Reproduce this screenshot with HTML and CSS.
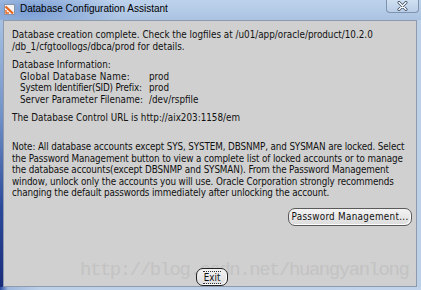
FILE: index.html
```html
<!DOCTYPE html>
<html>
<head>
<meta charset="utf-8">
<link rel="stylesheet" href="styles.css">
</head>
<body>
<div class="window">
  <div class="titlebar">
    <svg class="app-icon" width="11" height="11" viewBox="0 0 11 11">
      <rect x="0.5" y="0.5" width="10" height="10" fill="#f4f4f4" stroke="#8a94a8"/>
      <path d="M1.5 2.5 L9 9.5" stroke="#e8641c" stroke-width="2.2"/>
      <path d="M2 6 L2 9 L5 9" stroke="#e8641c" stroke-width="1.4" fill="none"/>
    </svg>
    <span class="title">Database Configuration Assistant</span>
    <div class="close-btn">
      <svg width="11" height="10" viewBox="0 0 11 10">
        <path d="M2 1.5 L9 8.5 M9 1.5 L2 8.5" stroke="#3a4a60" stroke-width="3" stroke-linecap="round"/>
        <path d="M2 1.5 L9 8.5 M9 1.5 L2 8.5" stroke="#ffffff" stroke-width="1.5" stroke-linecap="round"/>
      </svg>
    </div>
  </div>
  <div class="frame-row">
    <div class="frame-left"></div>
    <div class="content">
      <p class="para">Database creation complete. Check the logfiles at /u01/app/oracle/product/10.2.0<br>/db_1/cfgtoollogs/dbca/prod for details.</p>
      <div class="info">
        <div>Database Information:</div>
        <div class="kv"><span class="k k-wide">Global Database Name:</span><span>prod</span></div>
        <div class="kv"><span class="k k-tight">System Identifier(SID) Prefix:</span><span>prod</span></div>
        <div class="kv"><span class="k">Server Parameter Filename:</span><span>/dev/rspfile</span></div>
      </div>
      <p class="url">The Database Control URL is http://aix203:1158/em</p>
      <p class="note">Note: All database accounts except SYS, SYSTEM, DBSNMP, and SYSMAN are locked. Select<br>the Password Management button to view a complete list of locked accounts or to manage<br>the database accounts(except DBSNMP and SYSMAN). From the Password Management<br>window, unlock only the accounts you will use. Oracle Corporation strongly recommends<br>changing the default passwords immediately after unlocking the account.</p>
      <div class="pw-row"><button class="btn pw-btn">Password Management...</button></div>
      <div class="spacer"></div>
      <div class="watermark">http://blog.csdn.net/huangyanlong</div>
      <div class="exit-row"><button class="btn exit-btn"><span class="focus">Exit</span></button></div>
    </div>
    <div class="frame-right"></div>
  </div>
  <div class="frame-bottom"></div>
</div>
</body>
</html>
```

FILE: styles.css
```css
html, body {
  margin: 0;
  padding: 0;
  width: 421px;
  height: 290px;
  overflow: hidden;
  background: #b9cde6;
}
.window {
  width: 421px;
  height: 290px;
  display: flex;
  flex-direction: column;
}
.titlebar {
  height: 20px;
  flex: none;
  display: flex;
  align-items: flex-start;
  position: relative;
  background:
    radial-gradient(ellipse 90px 26px at 30px 10px, rgba(100,140,205,0.75), rgba(100,140,205,0) 100%),
    linear-gradient(to bottom, #bdd2ec 0%, #b3cae6 60%, #aac3e2 100%);
}
.app-icon {
  margin: 4px 0 0 4px;
  flex: none;
}
.title {
  margin: 3px 0 0 5px;
  font-family: "Liberation Sans", Arial, sans-serif;
  font-size: 10px;
  line-height: 12px;
  color: #000;
}
.close-btn {
  position: absolute;
  left: 386px;
  top: 0;
  width: 33px;
  height: 13px;
  box-sizing: border-box;
  border: 1px solid #7e93b0;
  border-top: none;
  border-radius: 0 0 4px 4px;
  background: linear-gradient(to bottom, #d0e0f2, #b9cde6);
  display: flex;
  align-items: center;
  justify-content: center;
}
.frame-row {
  flex: 1;
  display: flex;
  min-height: 0;
}
.frame-left {
  width: 3px;
  flex: none;
  background: linear-gradient(to bottom, #a7c1e3 0%, #7393c8 35%, #2c4a9a 70%, #1a2c7c 100%);
}
.frame-right {
  width: 4px;
  flex: none;
  background: #bcd0e8;
}
.frame-bottom {
  height: 3px;
  flex: none;
  background: linear-gradient(to right, #2a4aa0 0px, #9fb8dc 8px, #bcd0e8 40px, #c0d3ea 100%);
}
.content {
  flex: 1;
  position: relative;
  display: flex;
  flex-direction: column;
  background: #d0d0d0;
  border: 1px solid #8f9bac;
  padding: 8px 4px 0 8px;
  font-family: "DejaVu Sans", "Liberation Sans", sans-serif;
  font-stretch: condensed;
  font-size: 9.8px;
  line-height: 11.5px;
  color: #111;
  white-space: nowrap;
  overflow: hidden;
}
.para, .url, .note {
  margin: 0;
}
.info {
  margin-top: 7px;
}
.kv {
  display: flex;
  padding-left: 8px;
}
.kv .k {
  width: 129px;
  flex: none;
}
.k-wide {
  letter-spacing: 0.25px;
}
.k-tight {
  letter-spacing: -0.2px;
}
.url {
  margin-top: 7px;
}
.note {
  margin-top: 17.5px;
  letter-spacing: -0.12px;
}
.pw-row {
  display: flex;
  justify-content: flex-end;
  margin-top: 9px;
}
.btn {
  font-family: "DejaVu Sans", "Liberation Sans", sans-serif;
  font-stretch: condensed;
  font-size: 9.8px;
  color: #111;
  height: 18px;
  box-sizing: border-box;
  border: 1px solid #5a5a5a;
  border-radius: 7px;
  background: linear-gradient(to bottom, #f4f4f4, #dcdcdc);
  box-shadow: inset -1px -1px 0 #ffffff;
  padding: 0;
  margin: 0;
  white-space: nowrap;
}
.pw-btn {
  width: 124px;
  letter-spacing: 0.3px;
}
.spacer {
  flex: 1;
}
.exit-row {
  display: flex;
  justify-content: center;
  position: relative;
  z-index: 1;
}
.exit-btn {
  width: 32px;
  border: 1.5px solid #222;
}
.focus {
  display: inline-block;
  border-top: 1px dotted #333;
  border-bottom: 1px dotted #333;
  line-height: 11px;
  padding: 0 1px;
}
.watermark {
  position: absolute;
  left: 76px;
  bottom: 4px;
  font-family: "Liberation Mono", "Courier New", monospace;
  font-size: 19px;
  letter-spacing: -1.45px;
  color: #c3c3c3;
  line-height: 24px;
  pointer-events: none;
}
```
